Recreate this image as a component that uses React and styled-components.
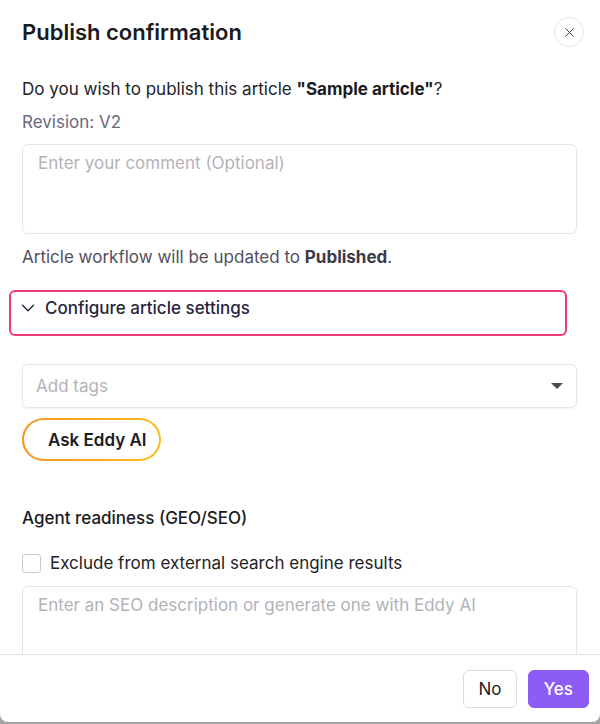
import React, { useState } from 'react';
import styled, { createGlobalStyle } from 'styled-components';
import { X, ChevronDown } from 'lucide-react';

const GlobalStyle = createGlobalStyle`
  html, body {
    margin: 0;
    padding: 0;
    background: #a3a3a3;
  }
  body {
    font-family: Inter, 'Noto Sans', sans-serif;
    -webkit-font-smoothing: antialiased;
  }
  * { box-sizing: border-box; }
`;

const Modal = styled.div`
  width: 600px;
  height: 722px;
  background: #fff;
  border-radius: 0 0 8px 8px;
  display: flex;
  flex-direction: column;
  overflow: hidden;
`;

const Header = styled.div`
  display: flex;
  align-items: center;
  justify-content: space-between;
  padding: 17px 16px 0 22px;
`;

const Title = styled.h2`
  margin: 0;
  font-size: 22px;
  line-height: 28px;
  font-weight: 600;
  color: #1b1b1f;
`;

const CloseButton = styled.button`
  width: 30px;
  height: 30px;
  border-radius: 50%;
  border: 1px solid #e4e4e7;
  background: #fff;
  color: #3f3f46;
  display: flex;
  align-items: center;
  justify-content: center;
  padding: 0;
  cursor: pointer;
`;

const Body = styled.div`
  flex: 1;
  overflow: hidden;
  padding: 30px 23px 0 22px;
  display: flex;
  flex-direction: column;

  > * {
    flex-shrink: 0;
  }
`;

const Text = styled.p`
  margin: ${p => p.$mt || 0}px 0 0;
  font-size: 17px;
  line-height: 24px;
  color: ${p => p.$color || '#222226'};
  font-weight: ${p => p.$weight || 400};

  b {
    font-weight: 700;
    color: ${p => p.$strong || '#1b1b1f'};
  }
`;

const TextArea = styled.textarea`
  display: block;
  width: 100%;
  height: ${p => p.$h}px;
  margin-top: ${p => p.$mt}px;
  padding: 6px 15px;
  border: 1px solid #e6e6e9;
  border-radius: 6px;
  font-family: inherit;
  font-size: 17px;
  line-height: 24px;
  color: #222;
  resize: none;
  outline: none;

  &::placeholder {
    color: #b3b3b8;
  }
`;

const Collapse = styled.button`
  display: flex;
  align-items: flex-start;
  gap: 6px;
  margin: 21px 0 0 -13px;
  width: 558px;
  height: 46px;
  padding: 4px 0 0 6px;
  border: 2px solid #f0387f;
  border-radius: 6px;
  background: #fff;
  font-family: inherit;
  font-size: 17px;
  line-height: 24px;
  font-weight: 500;
  color: #29243d;
  cursor: pointer;
  text-align: left;

  svg {
    margin-top: 1px;
  }
`;

const Select = styled.div`
  margin-top: 28px;
  height: 44px;
  display: flex;
  align-items: center;
  justify-content: space-between;
  padding: 0 13px 0 13px;
  border: 1px solid #e6e6e9;
  border-radius: 6px;
  box-shadow: 0 1px 2px rgba(0, 0, 0, 0.06);
  font-size: 17px;
  color: #b3b3b8;
`;

const Caret = styled.span`
  width: 0;
  height: 0;
  border-left: 6px solid transparent;
  border-right: 6px solid transparent;
  border-top: 6px solid #4b4b55;
`;

const AskButton = styled.button`
  align-self: flex-start;
  margin-top: 10px;
  height: 43px;
  padding: 0 12px 0 24px;
  border: 2px solid transparent;
  border-radius: 999px;
  background:
    linear-gradient(#fff, #fff) padding-box,
    linear-gradient(90deg, #f7941d, #fbbd18) border-box;
  font-family: inherit;
  font-size: 17px;
  font-weight: 600;
  color: #1b1b1f;
  cursor: pointer;
`;

const CheckRow = styled.label`
  display: flex;
  align-items: center;
  gap: 9px;
  margin-top: 21px;
  font-size: 17px;
  line-height: 24px;
  color: #222226;
  cursor: pointer;
`;

const Box = styled.span`
  width: 19px;
  height: 19px;
  border: 1px solid #c9c9cf;
  border-radius: 3px;
  background: ${p => (p.$checked ? '#8b5cf6' : '#fff')};
`;

const Footer = styled.div`
  border-top: 1px solid #e4e4e7;
  padding: 15px 11px 14px;
  display: flex;
  justify-content: flex-end;
  gap: 11px;
`;

const Button = styled.button`
  height: 38px;
  padding: 0 ${p => (p.$primary ? 15 : 14)}px;
  border-radius: 6px;
  border: 1px solid ${p => (p.$primary ? '#8b5cf6' : '#dcdce0')};
  background: ${p => (p.$primary ? '#8b5cf6' : '#fff')};
  color: ${p => (p.$primary ? '#fff' : '#1b1b1f')};
  font-family: inherit;
  font-size: 17px;
  font-weight: ${p => (p.$primary ? 500 : 400)};
  cursor: pointer;
`;

export default function App() {
  const [exclude, setExclude] = useState(false);

  return (
    <>
      <GlobalStyle />
      <Modal>
        <Header>
          <Title>Publish confirmation</Title>
          <CloseButton aria-label="Close">
            <X size={15} strokeWidth={1.6} />
          </CloseButton>
        </Header>
        <Body>
          <Text>
            Do you wish to publish this article <b>"Sample article"</b>?
          </Text>
          <Text $mt={9} $color="#6b6880">Revision: V2</Text>
          <TextArea $h={90} $mt={10} placeholder="Enter your comment (Optional)" />
          <Text $mt={11} $color="#524e60" $strong="#3d3a4a">
            Article workflow will be updated to <b>Published</b>.
          </Text>
          <Collapse>
            <ChevronDown size={22} strokeWidth={1.5} />
            Configure article settings
          </Collapse>
          <Select>
            Add tags
            <Caret />
          </Select>
          <AskButton>Ask Eddy AI</AskButton>
          <Text $mt={45} $weight={500} $color="#1b1b1f">Agent readiness (GEO/SEO)</Text>
          <CheckRow onClick={() => setExclude(v => !v)}>
            <Box $checked={exclude} />
            Exclude from external search engine results
          </CheckRow>
          <TextArea
            $h={90}
            $mt={11}
            placeholder="Enter an SEO description or generate one with Eddy AI"
          />
        </Body>
        <Footer>
          <Button>No</Button>
          <Button $primary>Yes</Button>
        </Footer>
      </Modal>
    </>
  );
}
